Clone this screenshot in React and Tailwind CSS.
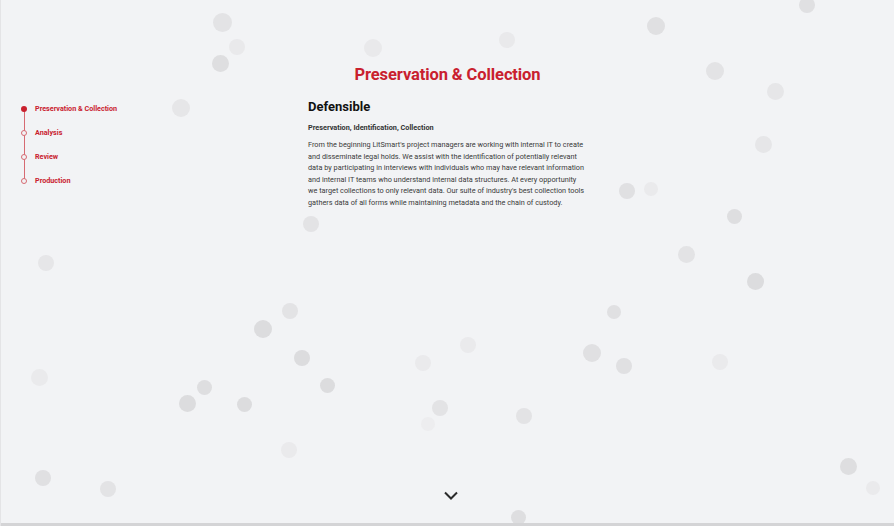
import React from 'react';

const dots = [
  [221, 22, 19, 'e3e3e5'], [236, 47, 16, 'e9e9eb'], [219, 63, 17, 'dedee0'], [180, 108, 18, 'e6e6e8'],
  [372, 48, 18, 'e9e9eb'], [506, 40, 16, 'e9e9eb'], [655, 26, 18, 'e0e0e2'], [806, 5, 16, 'e0e0e2'],
  [714, 71, 18, 'e3e3e5'], [774, 91, 17, 'e6e6e8'], [762, 144, 17, 'e6e6e8'], [626, 191, 16, 'e0e0e2'],
  [650, 189, 14, 'eaeaec'], [733, 216, 15, 'dedee0'], [685, 254, 17, 'e3e3e5'], [754, 281, 17, 'dcdcde'],
  [310, 224, 16, 'e3e3e5'], [45, 263, 16, 'e6e6e8'], [289, 311, 16, 'e3e3e5'], [262, 329, 18, 'dcdcde'],
  [301, 358, 16, 'dcdcde'], [326, 385, 15, 'dcdcde'], [203, 387, 15, 'dedee0'], [186, 403, 17, 'dcdcde'],
  [243, 404, 15, 'dcdcde'], [38, 377, 17, 'eaeaec'], [467, 345, 16, 'eaeaec'], [422, 363, 16, 'eaeaec'],
  [613, 312, 14, 'e0e0e2'], [591, 353, 18, 'e0e0e2'], [623, 366, 16, 'e0e0e2'], [719, 362, 16, 'eaeaec'],
  [439, 408, 16, 'e3e3e5'], [427, 424, 14, 'ededef'], [523, 416, 16, 'e3e3e5'], [288, 450, 16, 'eaeaec'],
  [42, 478, 16, 'e0e0e2'], [107, 489, 16, 'e3e3e5'], [847, 466, 17, 'dedee0'], [872, 488, 14, 'eaeaec'],
  [517, 517, 15, 'dedee0'],
];

const steps = ['Preservation & Collection', 'Analysis', 'Review', 'Production'];

const lines = [
  "From the beginning LitSmart's project managers are working with internal IT to create",
  'and disseminate legal holds. We assist with the identification of potentially relevant',
  'data by participating in interviews with individuals who may have relevant information',
  'and internal IT teams who understand internal data structures. At every opportunity',
  "we target collections to only relevant data. Our suite of industry's best collection tools",
  'gathers data of all forms while maintaining metadata and the chain of custody.',
];

export default function App() {
  return (
    <div className="relative h-[526px] w-full overflow-hidden bg-[#f2f3f5] border-l border-[#e4e4e6] font-['Roboto',sans-serif]">
      {/* particles */}
      {dots.map(([x, y, d, c], i) => (
        <span
          key={i}
          className="absolute rounded-full"
          style={{ left: x - d / 2, top: y - d / 2, width: d, height: d, background: '#' + c }}
        />
      ))}

      <div className="relative flex flex-col h-full">
        <h1 className="pt-[62px] text-center text-[16.5px] leading-[26px] font-bold tracking-[-0.1px] text-[#c9202e]">
          Preservation &amp; Collection
        </h1>

        <div className="flex mt-[10px]">
          {/* stepper */}
          <div className="w-[307px] pl-[20px] pt-[6px]">
            <div className="relative">
              <div className="absolute left-[2.5px] top-[4px] h-[72px] w-[1.5px] bg-[#d66a72]" />
              <ul className="flex flex-col gap-[14px]">
                {steps.map((s, i) => (
                  <li key={s} className="relative flex items-center gap-[8px] h-[10px]">
                    <span
                      className={
                        i === 0
                          ? 'w-[6px] h-[6px] rounded-full bg-[#c9202e]'
                          : 'w-[6px] h-[6px] rounded-full border border-[#d66a72] bg-[#f2f3f5]'
                      }
                    />
                    <span className="text-[7.2px] font-bold text-[#c9202e]">{s}</span>
                  </li>
                ))}
              </ul>
            </div>
          </div>

          {/* content */}
          <div className="w-[290px]">
            <h2 className="text-[13px] leading-[18px] font-bold text-[#111]">Defensible</h2>
            <h3 className="mt-[7px] text-[7.3px] leading-[10px] font-bold text-[#333]">
              Preservation, Identification, Collection
            </h3>
            <p className="mt-[6px] text-[7.3px] leading-[11.6px] text-[#3a3a3a] whitespace-nowrap">
              {lines.map((l) => (
                <span key={l} className="block">{l}</span>
              ))}
            </p>
          </div>
        </div>

        <div className="mt-auto mb-[23px] flex justify-center pl-[6px]">
          <svg width="14" height="9" viewBox="0 0 14 9" fill="none" stroke="#2b2b2b" strokeWidth="2">
            <path d="M1 1.5l6 6 6-6" />
          </svg>
        </div>
        <div className="h-[3px] bg-[#d4d4d6]" />
      </div>
    </div>
  );
}
